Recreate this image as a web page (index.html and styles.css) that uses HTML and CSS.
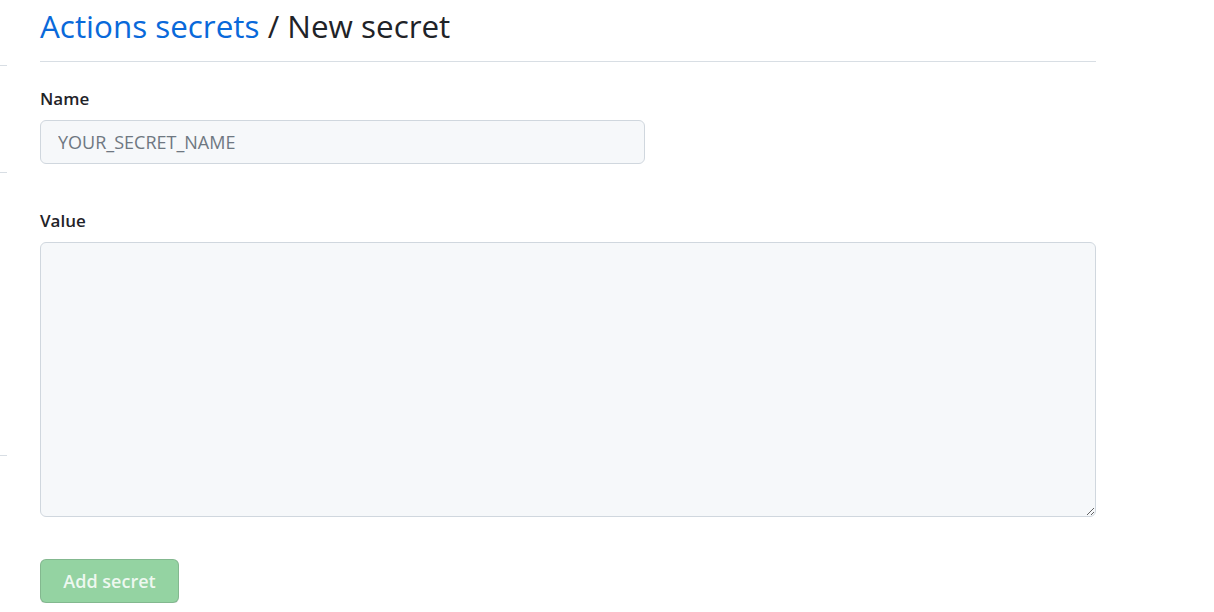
FILE: index.html
```html
<!DOCTYPE html>
<html lang="en">
<head>
    <meta charset="UTF-8">
    <meta name="viewport" content="width=device-width, initial-scale=1.0">
    <title>New secret</title>
    <link rel="stylesheet" href="styles.css">
</head>
<body>
    <div class="layout">
        <!-- edge of the settings sidebar, mostly scrolled out of view -->
        <div class="sidebar">
            <div class="side-item side-first"></div>
            <div class="side-item side-second"></div>
            <div class="side-item side-third"></div>
        </div>

        <div class="main">
            <div class="subhead">
                <h2 class="subhead-heading"><a href="#">Actions secrets</a> / New secret</h2>
            </div>

            <form class="secret-form">
                <div class="form-group">
                    <label for="secretName">Name</label>
                    <input type="text" id="secretName" class="form-control name-input" placeholder="YOUR_SECRET_NAME">
                </div>

                <div class="form-group">
                    <label for="secretValue">Value</label>
                    <textarea id="secretValue" class="form-control value-input"></textarea>
                </div>

                <button type="submit" class="btn-primary" disabled>Add secret</button>
            </form>
        </div>
    </div>
</body>
</html>
```

FILE: styles.css
```css
* {
    margin: 0;
    padding: 0;
    box-sizing: border-box;
}

body {
    font-family: "Open Sans", "Noto Sans", sans-serif;
    color: #1f2328;
    background: #ffffff;
    font-size: 14px;
}

.layout {
    display: flex;
    gap: 33px;
}

.sidebar {
    width: 7px;
    flex-shrink: 0;
}

.side-item {
    border-bottom: 1px solid #d8dee4;
}

.side-first {
    height: 66px;
}

.side-second {
    height: 107px;
}

.side-third {
    height: 283px;
}

.main {
    width: 1056px;
}

.subhead {
    padding-top: 4px;
    padding-bottom: 13px;
    border-bottom: 1px solid #d8dee4;
}

.subhead-heading {
    font-size: 31.4px;
    font-weight: 400;
    line-height: 44px;
}

.subhead-heading a {
    color: #0969da;
    text-decoration: none;
}

.secret-form {
    padding-top: 22px;
}

.form-group {
    margin-bottom: 42px;
}

label {
    display: block;
    font-size: 17px;
    font-weight: 600;
    line-height: 24px;
    padding-top: 3px;
    margin-bottom: 9px;
}

.form-control {
    display: block;
    font-family: inherit;
    font-size: 18px;
    color: #1f2328;
    background: #f6f8fa;
    border: 1px solid #d0d7de;
    border-radius: 6px;
    padding: 0 17px;
}

.form-control::placeholder {
    color: #6e7781;
}

.name-input {
    width: 605px;
    height: 44px;
}

.value-input {
    width: 100%;
    height: 275px;
    padding: 8px 17px;
}

.btn-primary {
    width: 139px;
    height: 44px;
    font-family: inherit;
    font-size: 18px;
    font-weight: 600;
    color: rgba(255, 255, 255, 0.85);
    background: #94d3a2;
    border: 1px solid rgba(31, 35, 40, 0.15);
    border-radius: 6px;
    box-shadow: 0 1px 0 rgba(31, 35, 40, 0.1);
}
```
